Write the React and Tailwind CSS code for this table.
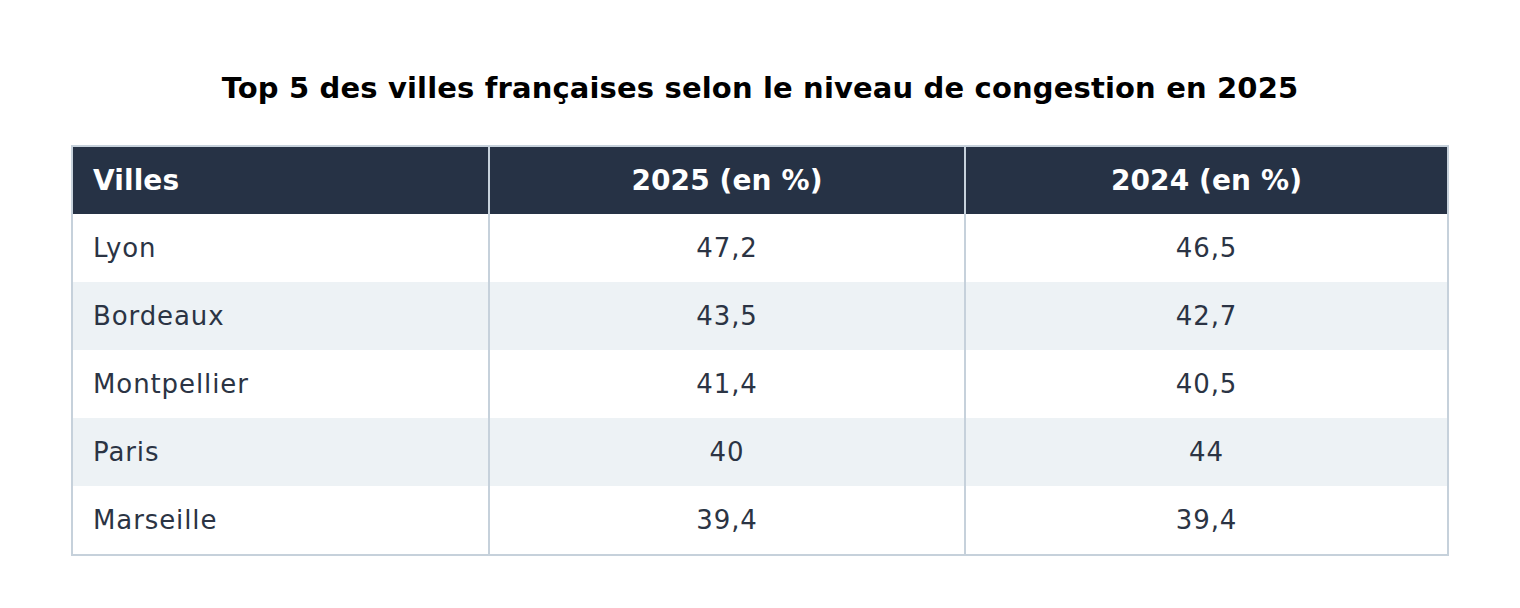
import React from "react";

const rows = [
  ["Lyon", "47,2", "46,5"],
  ["Bordeaux", "43,5", "42,7"],
  ["Montpellier", "41,4", "40,5"],
  ["Paris", "40", "44"],
  ["Marseille", "39,4", "39,4"],
];

export default function App() {
  return (
    <div className="w-[1520px] h-[608px] bg-white flex flex-col items-center pt-[68px]" style={{ fontFamily: '"DejaVu Sans", "Open Sans", sans-serif' }}>
      <h1 className="text-[29px] leading-[40px] font-bold text-black tracking-[0.15px]">
        Top 5 des villes françaises selon le niveau de congestion en 2025
      </h1>
      <div className="mt-[37px] w-[1378px] border-2 border-[#c6d1db]">
        <div className="grid grid-cols-[417px_476px_481px] bg-[#263245] text-white text-[28px] font-bold h-[67px] items-center tracking-[0.1px]">
          <div className="pl-[20px] border-r-2 border-[#c6d1db] h-full flex items-center">Villes</div>
          <div className="text-center border-r-2 border-[#c6d1db] h-full flex items-center justify-center">2025 (en %)</div>
          <div className="text-center h-full flex items-center justify-center">2024 (en %)</div>
        </div>
        {rows.map((r, i) => (
          <div key={r[0]} className={`grid grid-cols-[417px_476px_481px] h-[68px] text-[26px] tracking-[0.9px] text-[#2b3444] ${i % 2 === 1 ? "bg-[#edf2f5]" : "bg-white"}`}>
            <div className="pl-[20px] border-r-2 border-[#c6d1db] flex items-center">{r[0]}</div>
            <div className="border-r-2 border-[#c6d1db] flex items-center justify-center">{r[1]}</div>
            <div className="flex items-center justify-center">{r[2]}</div>
          </div>
        ))}
      </div>
    </div>
  );
}
